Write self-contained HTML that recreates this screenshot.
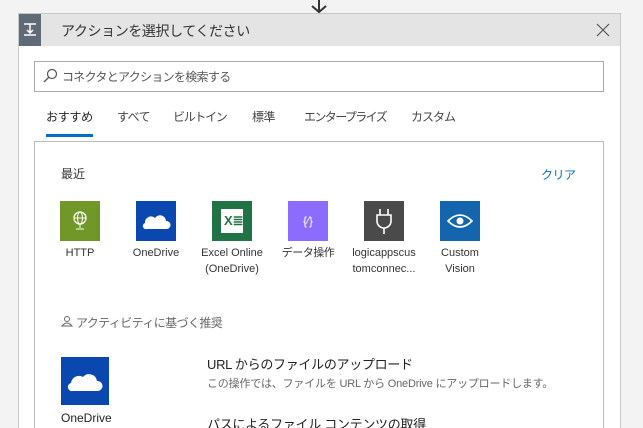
<!DOCTYPE html><html><head><meta charset="utf-8"><style>
html,body{margin:0;width:643px;height:428px;overflow:hidden}
body{background:#f3f3f3;font-family:"Liberation Sans","Noto Sans CJK JP",sans-serif;color:#333;position:relative}
.a{position:absolute;white-space:nowrap}
.card{left:18px;top:13px;width:601px;height:420px;background:#fff;border:1px solid #c8c8c8}
.hdr{left:19px;top:14px;width:601px;height:32px;background:#e4e4e4}
.ic{width:40px;height:40px;top:201px;display:flex;align-items:center;justify-content:center}
.lb{top:245px;width:76px;text-align:center;font-size:11px;line-height:16px;color:#333}
.t{top:108px;font-size:12px;color:#444}
</style></head><body>
<svg class="a" style="left:310px;top:0" width="18" height="14"><path d="M9 0V12M2 6L9 12L16 6" stroke="#333" stroke-width="2" fill="none"/></svg>
<div class="a card"></div>
<div class="a hdr"></div>
<div class="a" style="left:19px;top:14px;width:22px;height:32px;background:#5e6a76"></div>
<svg class="a" style="left:22px;top:22px" width="16" height="16"><path d="M2 2H14M8 2V10M5 8L8 11L11 8M2 13H14" stroke="#fff" stroke-width="1.5" fill="none"/></svg>
<div class="a" style="left:61px;top:21px;font-size:14px;letter-spacing:-0.4px;color:#333">アクションを選択してください</div>
<svg class="a" style="left:596px;top:23px" width="14" height="14"><path d="M1 1L13 13M13 1L1 13" stroke="#555" stroke-width="1.2"/></svg>
<div class="a" style="left:34px;top:61px;width:568px;height:29px;border:1px solid #aaa"></div>
<svg class="a" style="left:42px;top:68px" width="16" height="16"><circle cx="10" cy="6" r="4.5" stroke="#555" fill="none" stroke-width="1.2"/><path d="M7 9L2 14" stroke="#555" stroke-width="1.3"/></svg>
<div class="a" style="left:62px;top:68px;font-size:12px;letter-spacing:-0.7px;color:#555">コネクタとアクションを検索する</div>
<div class="a t" style="left:46px;color:#222;letter-spacing:-0.3px">おすすめ</div>
<div class="a" style="left:46px;top:134px;width:47px;height:3px;background:#0072c6"></div>
<div class="a t" style="left:117px;letter-spacing:-0.5px">すべて</div>
<div class="a t" style="left:173px;letter-spacing:-1.3px">ビルトイン</div>
<div class="a t" style="left:252px;letter-spacing:-0.5px">標準</div>
<div class="a t" style="left:304px;letter-spacing:-1.6px">エンタープライズ</div>
<div class="a t" style="left:411px;letter-spacing:-1px">カスタム</div>
<div class="a" style="left:34px;top:141px;width:568px;height:300px;border:1px solid #bbb"></div>
<div class="a" style="left:61px;top:165px;font-size:12px;color:#333">最近</div>
<div class="a" style="left:541px;top:166px;font-size:12px;letter-spacing:-0.5px;color:#0072c6">クリア</div>
<div class="a ic" style="left:60px;background:#709727"><svg width="20" height="24"><circle cx="10" cy="9" r="6" stroke="#fff" fill="none" stroke-width="1.3"/><ellipse cx="10" cy="9" rx="2.5" ry="6" stroke="#fff" fill="none"/><path d="M4 9H16M10 15V19M6 20H14" stroke="#fff"/></svg></div>
<div class="a ic" style="left:136px;background:#0a48b0"><svg width="30" height="20"><path d="M6 18H26A4 4 0 0 0 25 10A6 6 0 0 0 14 7A6 6 0 0 0 4 12A3 3 0 0 0 6 18Z" fill="#fff"/></svg></div>
<div class="a ic" style="left:212px;background:#217346"><div style="width:22px;height:24px;background:#fff;color:#217346;font-size:13px;font-weight:bold;line-height:24px;padding-left:3px;box-sizing:border-box">X≣</div></div>
<div class="a ic" style="left:288px;background:#8c6cff;color:#fff;font-size:12px">{⁄}</div>
<div class="a ic" style="left:364px;background:#4a4a4a"><svg width="20" height="26"><path d="M6 1V7M14 1V7M3 7H17V13A7 7 0 0 1 3 13Z M10 20V26" stroke="#fff" stroke-width="1.6" fill="none"/></svg></div>
<div class="a ic" style="left:440px;background:#1565ae"><svg width="28" height="18"><path d="M2 9Q14 -3 26 9Q14 21 2 9Z" stroke="#fff" stroke-width="1.6" fill="none"/><circle cx="14" cy="9" r="3.5" fill="#fff"/></svg></div>
<div class="a lb" style="left:42px">HTTP</div>
<div class="a lb" style="left:118px">OneDrive</div>
<div class="a lb" style="left:194px">Excel Online<br>(OneDrive)</div>
<div class="a lb" style="left:270px;letter-spacing:-0.5px">データ操作</div>
<div class="a lb" style="left:346px">logicappscus<br>tomconnec...</div>
<div class="a lb" style="left:422px">Custom<br>Vision</div>
<svg class="a" style="left:61px;top:315px" width="12" height="12"><circle cx="6" cy="4" r="2.5" stroke="#666" fill="none"/><path d="M1 11Q6 5 11 11Z" stroke="#666" fill="none"/></svg>
<div class="a" style="left:76px;top:314px;font-size:12px;letter-spacing:-0.6px;color:#666">アクティビティに基づく推奨</div>
<div class="a" style="left:61px;top:357px;width:48px;height:48px;background:#0a48b0;display:flex;align-items:center;justify-content:center"><svg width="38" height="24"><path d="M7 22H32A5 5 0 0 0 31 12A8 8 0 0 0 17 8A8 8 0 0 0 5 14A4 4 0 0 0 7 22Z" fill="#fff"/></svg></div>
<div class="a" style="left:61px;top:411px;font-size:12px;color:#222">OneDrive</div>
<div class="a" style="left:207px;top:354px;font-size:13px;letter-spacing:-0.3px;color:#222">URL からのファイルのアップロード</div>
<div class="a" style="left:207px;top:375px;font-size:11px;letter-spacing:-0.2px;color:#666">この操作では、ファイルを URL から OneDrive にアップロードします。</div>
<div class="a" style="left:207px;top:414px;font-size:13px;letter-spacing:-0.3px;color:#222">パスによるファイル コンテンツの取得</div>
</body></html>
